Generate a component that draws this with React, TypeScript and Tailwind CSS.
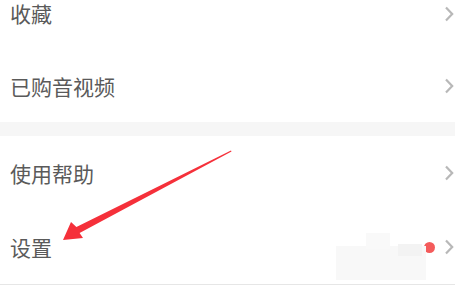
type Row = { label: string; height: string; dot?: boolean };

const groupA: Row[] = [
    { label: '收藏', height: 'h-[73px]' },
    { label: '已购音视频', height: 'h-[72px]' },
];

const groupB: Row[] = [
    { label: '使用帮助', height: 'h-[74px]' },
    { label: '设置', height: 'h-[74px]', dot: true },
];

function Chevron() {
    return (
        <svg width="10" height="16" viewBox="0 0 10 16" className="shrink-0">
            <path d="M2 1.5 L8.2 8 L2 14.5" fill="none" stroke="#b8b8b8" strokeWidth="2.2" />
        </svg>
    );
}

function MenuRow({ row }: { row: Row }) {
    return (
        <div className={`${row.height} flex items-center gap-[9px] pl-[10px] pr-[1px]`}>
            <span className="flex-1 text-[21px] leading-none text-[#5a5a5a]">{row.label}</span>
            {row.dot && <span className="w-[11px] h-[11px] rounded-full bg-[#f45b5b]" />}
            <Chevron />
        </div>
    );
}

export default function App() {
    return (
        <div className="relative w-[465px] h-[291px] overflow-hidden bg-white font-['Noto_Sans_CJK_SC','Noto_Sans',sans-serif]">
            <div className="w-[455px] -mt-[23px]">
                {groupA.map((row) => (
                    <MenuRow key={row.label} row={row} />
                ))}
                <div className="h-[14px] bg-[#f6f6f6]" />
                {groupB.map((row) => (
                    <MenuRow key={row.label} row={row} />
                ))}
                <div className="h-px bg-[#e6e6e6]" />
            </div>

            {/* blurred watermark patches */}
            <div className="absolute left-[336px] top-[246px] w-[90px] h-[34px] bg-[#f8f8f8]" />
            <div className="absolute left-[366px] top-[233px] w-[24px] h-[16px] bg-[#f9f9f9]" />
            <div className="absolute left-[398px] top-[244px] w-[24px] h-[12px] bg-[#f3f3f3]" />

            {/* annotation arrow */}
            <svg className="absolute inset-0 pointer-events-none" width="465" height="291" viewBox="0 0 465 291">
                <polygon
                    points="231,150.5 231.5,151.5 79.6,233.1 83,238 63,240 71,222 76.4,226.9"
                    fill="#f5303a"
                />
            </svg>
        </div>
    );
}
